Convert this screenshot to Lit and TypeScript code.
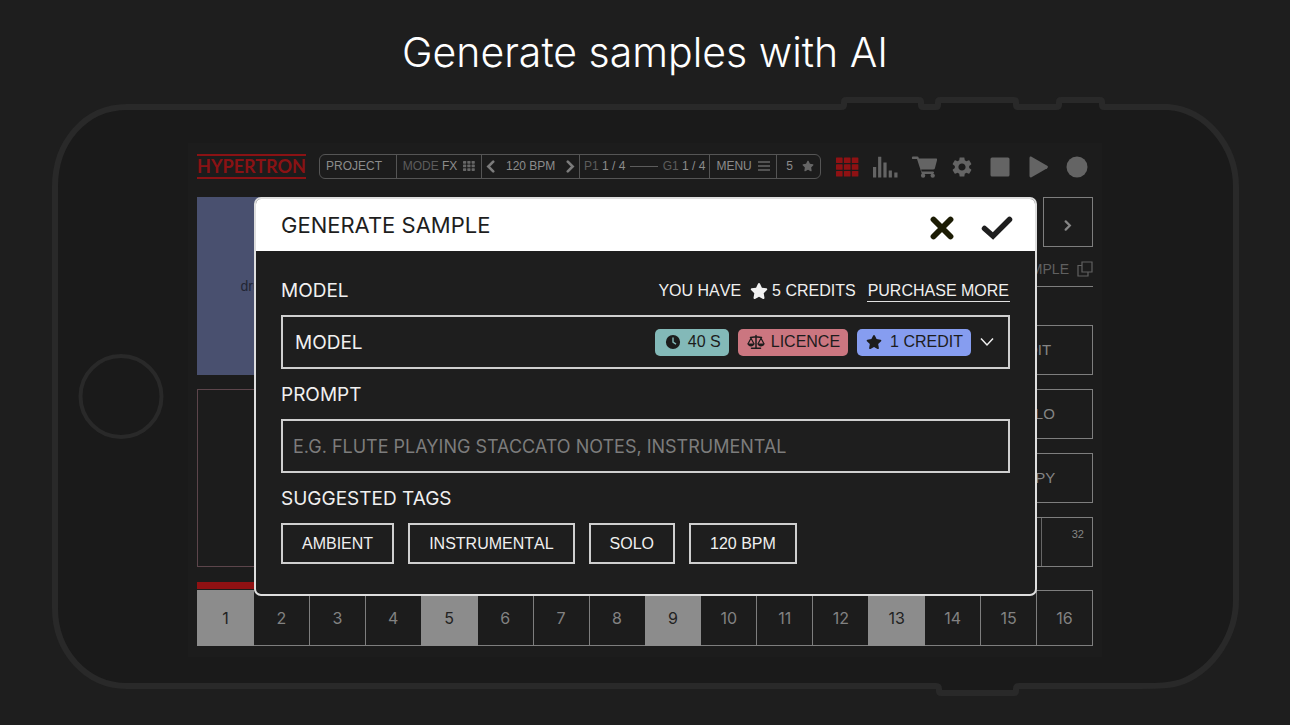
import { LitElement, html, css, svg } from "lit";
import { customElement, property, state } from "lit/decorators.js";

const STAR =
  "M316.9 18C311.6 7 300.4 0 288.1 0s-23.4 7-28.8 18L195 150.3 51.4 171.5c-12 1.8-22 10.2-25.7 21.7s-.7 24.2 7.9 32.7L137.8 329 113.2 474.7c-2 12 3 24.2 12.9 31.3s23 8 33.8 2.3l128.3-68.5 128.3 68.5c10.8 5.7 23.9 4.9 33.8-2.3s14.9-19.3 12.9-31.3L438.5 329 542.7 225.9c8.6-8.5 11.7-21.2 7.9-32.7s-13.7-19.9-25.7-21.7L381.2 150.3 316.9 18z";

const GEAR =
  "M19.14 12.94c.04-.3.06-.61.06-.94 0-.32-.02-.64-.07-.94l2.03-1.58c.18-.14.23-.41.12-.61l-1.92-3.32c-.12-.22-.37-.29-.59-.22l-2.39.96c-.5-.38-1.03-.7-1.62-.94l-.36-2.54c-.04-.24-.24-.41-.48-.41h-3.84c-.24 0-.43.17-.47.41l-.36 2.54c-.59.24-1.13.57-1.62.94l-2.39-.96c-.22-.08-.47 0-.59.22L2.74 8.87c-.12.21-.08.47.12.61l2.03 1.58c-.05.3-.09.63-.09.94s.02.64.07.94l-2.03 1.58c-.18.14-.23.41-.12.61l1.92 3.32c.12.22.37.29.59.22l2.39-.96c.5.38 1.03.7 1.62.94l.36 2.54c.05.24.24.41.48.41h3.84c.24 0 .44-.17.47-.41l.36-2.54c.59-.24 1.13-.56 1.62-.94l2.39.96c.22.08.47 0 .59-.22l1.92-3.32c.12-.22.07-.47-.12-.61l-2.01-1.58zM12 15.6c-1.98 0-3.6-1.62-3.6-3.6s1.62-3.6 3.6-3.6 3.6 1.62 3.6 3.6-1.62 3.6-3.6 3.6z";

const grid9 = (w: number, h: number, sx: number, sy: number) =>
  [0, 1, 2].flatMap((r) =>
    [0, 1, 2].map((c) => svg`<rect x=${c * sx} y=${r * sy} width=${w} height=${h} rx="0.6"/>`)
  );

const ICONS: Record<string, { box: string; body: unknown }> = {
  star: { box: "0 0 576 512", body: svg`<path d=${STAR}/>` },
  pads: { box: "-2 -3.5 26 26", body: grid9(6.6, 5.6, 7.9, 6.7) },
  dots: { box: "0 0 12 10", body: grid9(3.2, 2.7, 4.3, 3.6) },
  bars: {
    box: "0 0 26 26",
    body: svg`<path d="M1 13h3.200v10.500H1zM6.100 2.700h3.200v20.800H6.100zM11.400 8.500h3.200v15h-3.200zM16.700 16.500h3.200v7h-3.200zM22.300 18.500h3.200v5h-3.200z"/>`,
  },
  cart: {
    box: "-1 0 26 26",
    body: svg`<path d="M1 2.600h4.200c.8 0 1.300.4 1.500 1.100l.2.900h17.200c.8 0 1.200.6 1 1.300l-2.200 8.300c-.2.800-.8 1.200-1.500 1.200H9.200l.4 2H20c1.600 0 2 .3 2 1.100s-.5 1-1 1c1.500.500 1.900 1.400 1.900 2.100a2.200 2.200 0 0 1-4.400 0c0-.800.300-1.300.800-1.700h-6.800c.500.400.800.900.800 1.700a2.200 2.200 0 0 1-4.400 0c0-.900.300-1.500.900-1.900L5 5H1C.200 5-.100 4.600-.100 3.900S.300 2.600 1 2.600z"/>`,
  },
  gear: { box: "1 1 22 22", body: svg`<path d=${GEAR}/>` },
  stop: { box: "0 0 26 26", body: svg`<rect x="3.500" y="3.500" width="19" height="19" rx="1.500"/>` },
  play: {
    box: "1 0 26 26",
    body: svg`<path d="M4.500 4v18c0 1.200 1 1.700 2 1.200l15.700-9c1-.6 1-1.800 0-2.400L6.500 2.800c-1-.5-2 0-2 1.200z"/>`,
  },
  record: { box: "0 0 26 26", body: svg`<circle cx="13" cy="13" r="10.500"/>` },
  close: {
    box: "0 0 26 26",
    body: svg`<path d="M4.500 4.500l17 17M21.500 4.500l-17 17" fill="none" stroke="currentColor" stroke-width="5.800" stroke-linecap="round"/>`,
  },
  check: {
    box: "0 0 32 26",
    body: svg`<path d="M3.500 13.500l8.500 7.500L28.500 4.500" fill="none" stroke="currentColor" stroke-width="5.500" stroke-linecap="round" stroke-linejoin="miter"/>`,
  },
  clock: {
    box: "0 0 18 18",
    body: svg`<path fill-rule="evenodd" d="M9 1.900a7.100 7.100 0 1 0 0 14.200 7.100 7.100 0 0 0 0-14.200zM8.300 4.500h1.400v4.200l2.700 1.800-.8 1.200L8.300 9.400z"/>`,
  },
  scales: {
    box: "0 0 18 16",
    body: svg`<g fill="none" stroke="currentColor" stroke-width="1.500" stroke-linecap="round" stroke-linejoin="round"><path d="M9 1.500v12.500M4.500 14.300h9M3.500 3.500L9 2.800l5.500.7"/><path d="M1.200 9.500L4 4.200l2.800 5.300M11.200 9.500L14 4.200l2.800 5.300" stroke-width="1.200"/></g><path d="M.3 9.500h7.400c-.3 1.800-1.800 2.900-3.700 2.900S.6 11.300.3 9.500zM10.300 9.500h7.400c-.3 1.800-1.800 2.900-3.700 2.900s-3.400-1.100-3.700-2.900z"/>`,
  },
  down: {
    box: "0 0 14 10",
    body: svg`<path d="M1 1.500l6 6.500 6-6.500" fill="none" stroke="currentColor" stroke-width="1.500"/>`,
  },
  left: {
    box: "0 0 8 12",
    body: svg`<path d="M6.500 1.500L2 6l4.500 4.500" fill="none" stroke="currentColor" stroke-width="2.400" stroke-linecap="round"/>`,
  },
  right: {
    box: "0 0 8 12",
    body: svg`<path d="M1.500 1.500L6 6l-4.500 4.500" fill="none" stroke="currentColor" stroke-width="2.400" stroke-linecap="round"/>`,
  },
  menu: {
    box: "0 0 12 10",
    body: svg`<path d="M0 1h12M0 5h12M0 9h12" stroke="currentColor" stroke-width="1.400"/>`,
  },
  copy: {
    box: "0 0 16 16",
    body: svg`<path d="M5 1h10v10H5zM5 4.500H1V15h10v-4" fill="none" stroke="currentColor" stroke-width="1.200"/>`,
  },
};

@customElement("app-icon")
class AppIcon extends LitElement {
  @property() name = "star";
  static styles = css`
    :host { display: inline-flex; flex: none; width: 16px; height: 16px; }
    svg { display: block; width: 100%; height: 100%; fill: currentColor; }
  `;
  render() {
    const icon = ICONS[this.name];
    return html`<svg viewBox=${icon.box} aria-hidden="true">${icon.body}</svg>`;
  }
}

@customElement("top-bar")
class TopBar extends LitElement {
  static styles = css`
    :host { display: flex; align-items: center; height: 26px; color: #8c8c8c; font: 12px/14px "Liberation Sans", Arial, sans-serif; }
    .logo {
      box-sizing: border-box; display: flex; justify-content: center; width: 109px; height: 25px; margin-right: 13px;
      border-top: 2px solid #8a1214; border-bottom: 2px solid #8a1214;
      color: #8a1214; font: 700 18px/20px Lato, sans-serif; white-space: nowrap;
    }
    .pill {
      box-sizing: border-box; display: grid; flex: 0 1 502px; height: 25px;
      grid-template-columns: 76fr 86fr 98fr 131fr 67fr 44fr;
      border: 1px solid #555; border-radius: 6px;
    }
    button { font: inherit; color: inherit; background: none; border: 0; margin: 0; padding: 0; }
    .seg { display: flex; align-items: center; justify-content: space-between; padding: 0 6px; white-space: nowrap; }
    .seg + .seg { border-left: 1px solid #555; }
    .seg.spread { padding: 0 4px; }
    .seg.credits { padding: 0 6px 0 9px; }
    .dim { color: #5c5c5c; }
    .dash { flex: 1; height: 1px; margin: 0 5px; background: #5c5c5c; }
    .seg app-icon { width: 12px; height: 12px; color: #666; }
    .step { display: inline-flex; }
    .step app-icon { width: 9px; height: 13px; color: #7c7c7c; }
    nav { display: flex; flex: 1; justify-content: space-between; margin: 0 3px 0 13px; padding-top: 1px; color: #646464; }
    nav button { display: flex; }
    nav app-icon { width: 26px; height: 26px; }
    .gear { box-sizing: border-box; padding: 2px; }
    .on { color: #8f1113; }
  `;
  render() {
    return html`
      <div class="logo">HYPERTRON</div>
      <div class="pill">
        <button class="seg">PROJECT</button>
        <button class="seg"><span><span class="dim">MODE</span> FX</span><app-icon name="dots"></app-icon></button>
        <div class="seg spread">
          <button class="step" aria-label="Slower"><app-icon name="left"></app-icon></button>120 BPM<button
            class="step" aria-label="Faster"><app-icon name="right"></app-icon></button>
        </div>
        <button class="seg spread">
          <span><span class="dim">P1</span> 1 / 4</span><span class="dash"></span><span><span class="dim">G1</span> 1 / 4</span>
        </button>
        <button class="seg">MENU<app-icon name="menu"></app-icon></button>
        <button class="seg credits">5<app-icon name="star"></app-icon></button>
      </div>
      <nav>
        ${["pads", "bars", "cart", "gear", "stop", "play", "record"].map(
          (n) => html`<button class=${n === "pads" ? "on" : ""} aria-label=${n}><app-icon class=${n} name=${n}></app-icon></button>`
        )}
      </nav>
    `;
  }
}

@customElement("step-row")
class StepRow extends LitElement {
  static styles = css`
    :host { display: block; }
    .progress { width: 57px; height: 7px; margin-bottom: 1px; background: #8f1113; }
    .steps { display: grid; grid-template-columns: repeat(16, 1fr); border-right: 1px solid #7e7e7e; }
    button {
      height: 56px; margin: 0; padding: 0; background: none; color: #828282;
      border: 1px solid #7e7e7e; border-right: 0; font: 16px/20px Inter, "Liberation Sans", sans-serif;
    }
    .hit { position: relative; background: #8c8c8c; border-color: #8c8c8c; color: #222; box-shadow: 1px 0 #8c8c8c; }
  `;
  render() {
    return html`
      <div class="progress"></div>
      <div class="steps">
        ${Array.from({ length: 16 }, (_, i) => html`<button class=${i % 4 ? "" : "hit"}>${i + 1}</button>`)}
      </div>
    `;
  }
}

@customElement("generate-dialog")
class GenerateDialog extends LitElement {
  @state() private prompt = "";
  static styles = css`
    :host {
      display: block; box-sizing: border-box; overflow: hidden; border: 2px solid #dedede; border-radius: 7px;
      background: #1e1e1e; color: #f0f0f0; font: 16px/20px "Liberation Sans", Arial, sans-serif; font-kerning: none;
    }
    button, select, input { font: inherit; color: inherit; margin: 0; border-radius: 0; box-sizing: border-box; }
    header { display: flex; align-items: center; height: 52px; padding: 0 20px 0 25px; background: #fff; color: #1e1e1e; }
    h2 { flex: 1; margin: 0; font: 400 22px/26px Inter, sans-serif; }
    header button { display: flex; padding: 0; border: 0; background: none; }
    header .no { width: 26px; margin: 5px 26px 0 0; color: #1c1c04; }
    header .no app-icon { width: 26px; height: 26px; }
    header .yes { margin: 5px 2px 0 0; }
    header .yes app-icon { width: 32px; height: 26px; }
    .body { padding: 14px 25px 30px; }
    .row { box-sizing: border-box; display: flex; align-items: center; height: 50px; padding-top: 2px; }
    .caption { flex: 1; font: 19px/22px Inter, sans-serif; }
    .have { display: flex; align-items: center; }
    .have app-icon { width: 18px; height: 18px; margin: 0 4px 0 9px; }
    a { margin-left: 11px; padding: 0 1px; color: inherit; text-decoration: none; line-height: 20px; border-bottom: 1px solid #e0e0e0; }
    .pick { display: grid; align-items: center; }
    .pick > * { grid-area: 1 / 1; }
    select, input { width: 100%; height: 54px; padding: 0 12px; border: 2px solid #cfcfcf; background: none; outline: 0; }
    select { appearance: none; padding-top: 2px; font: 19px/22px Inter, sans-serif; }
    input { padding: 0 10px; font: 18px/22px Inter, sans-serif; }
    input::placeholder { color: #7c7c7c; opacity: 1; }
    .chips { display: flex; align-items: center; justify-self: end; gap: 9px; padding-right: 16px; pointer-events: none; }
    .chip { display: flex; align-items: center; gap: 6px; height: 27px; padding: 0 8px 0 9px; border-radius: 5px; color: #1c1c1c; }
    .chip app-icon { box-sizing: border-box; width: 18px; height: 18px; }
    .chip.blue app-icon { padding-right: 2px; }
    .teal { background: #83b9b8; }
    .rose { background: #cb7680; }
    .blue { background: #869df0; }
    .down { width: 14px; height: 10px; }
    .tags { display: flex; flex-wrap: wrap; gap: 14px; }
    .tags button { height: 41px; padding: 0 19px; border: 2px solid #cfcfcf; background: none; }
  `;
  render() {
    return html`
      <header>
        <h2>GENERATE SAMPLE</h2>
        <button class="no" aria-label="Cancel"><app-icon name="close"></app-icon></button>
        <button class="yes" aria-label="Confirm"><app-icon name="check"></app-icon></button>
      </header>
      <div class="body">
        <div class="row">
          <label class="caption" for="model">MODEL</label>
          <span class="have">YOU HAVE<app-icon name="star"></app-icon>5 CREDITS</span>
          <a href="#credits">PURCHASE MORE</a>
        </div>
        <div class="pick">
          <select id="model"><option>MODEL</option></select>
          <div class="chips">
            <span class="chip teal"><app-icon name="clock"></app-icon>40 S</span>
            <span class="chip rose"><app-icon name="scales"></app-icon>LICENCE</span>
            <span class="chip blue"><app-icon name="star"></app-icon>1 CREDIT</span>
            <app-icon class="down" name="down"></app-icon>
          </div>
        </div>
        <div class="row"><label class="caption" for="prompt">PROMPT</label></div>
        <input id="prompt" .value=${this.prompt} placeholder="E.G. FLUTE PLAYING STACCATO NOTES, INSTRUMENTAL"
          @input=${(e: Event) => (this.prompt = (e.target as HTMLInputElement).value)} />
        <div class="row"><span class="caption">SUGGESTED TAGS</span></div>
        <div class="tags">
          ${["AMBIENT", "INSTRUMENTAL", "SOLO", "120 BPM"].map(
            (t) => html`<button @click=${() => (this.prompt = this.prompt ? `${this.prompt}, ${t}` : t)}>${t}</button>`
          )}
        </div>
      </div>
    `;
  }
}

@customElement("app-root")
class AppRoot extends LitElement {
  static styles = css`
    :host { display: block; min-height: 100vh; background: #1e1e1e; }
    h1 {
      margin: 0; padding: 24px 0 16px; text-align: center; color: #fff;
      font: 300 41px/56px Inter, "Liberation Sans", sans-serif;
    }
    .device { display: grid; max-width: 1190px; margin: 0 auto; }
    .device > * { grid-area: 1 / 1; }
    .frame { display: block; width: 100%; height: 100%; fill: #1a1a1a; stroke: #292929; stroke-linejoin: round; }
    .screen {
      position: relative; box-sizing: border-box; margin: 47px 138px 39px; padding: 10px 9px;
      background: #1c1c1c; color: #858585; font: 15px/18px "Liberation Sans", Arial, sans-serif;
    }
    .work { display: flex; justify-content: space-between; margin: 18px 0 15px; }
    .pads { display: flex; flex-direction: column; gap: 14px; width: 126px; }
    .pad { box-sizing: border-box; height: 178px; display: flex; align-items: center; justify-content: center; font-size: 14px; }
    .filled { background: #49506f; color: #222634; }
    .empty { border: 1px solid #5c454b; }
    .side { width: 118px; display: flex; flex-direction: column; gap: 14px; }
    .side button { box-sizing: border-box; height: 50px; padding: 0; margin: 0; border: 1px solid #7e7e7e; background: none; color: inherit; font: inherit; }
    .pair { display: flex; justify-content: space-between; }
    .side .pair button { display: flex; justify-content: center; align-items: center; width: 50px; padding-top: 6px; }
    .pair app-icon { width: 8px; height: 11px; }
    .source {
      display: flex; align-items: center; justify-content: flex-end; gap: 8px; height: 34px; margin: -9px 0 24px;
      border-bottom: 1px solid #7e7e7e; color: #606060; font-size: 14px;
    }
    .counts { box-sizing: border-box; display: flex; border: 1px solid #7e7e7e; height: 50px; }
    .counts span { flex: 1; font-size: 11px; line-height: 14px; text-align: right; padding: 9px 8px; }
    .counts span + span { flex: 0 0 34px; border-left: 1px solid #666; }
    generate-dialog { position: absolute; top: 54px; left: 66px; right: 65px; }
  `;
  render() {
    return html`
      <h1>Generate samples with AI</h1>
      <div class="device">
        <svg class="frame" viewBox="50 96 1190 600" preserveAspectRatio="none" aria-hidden="true">
          <path stroke-width="6" d="M127 107H841Q844 107 844 105V102Q844 100 846 100H919Q921 100 921 102V105Q921 107 923 107H936Q938 107 938 105V102Q938 100 940 100H1014Q1016 100 1016 102V105Q1016 107 1018 107H1056Q1059 107 1059 105V102Q1059 100 1061 100H1100Q1102 100 1102 102V105Q1102 107 1104 107H1168C1206 110 1236 146 1236 187V600C1236 635 1214 668 1184 681C1172 686 1156 686 1140 686H1019Q1016 686 1016 689V691Q1016 693 1014 693H941Q939 693 939 691V689Q939 686 936 686H127C85 686 55 650 55 608V187C55 142 85 107 127 107Z"/>
          <circle cx="121" cy="396.500" r="40.500" stroke-width="4"/>
        </svg>
        <main class="screen">
          <top-bar></top-bar>
          <div class="work">
            <div class="pads">
              <div class="pad filled">drums</div>
              <div class="pad empty"></div>
            </div>
            <div class="side">
              <div class="pair">
                <button aria-label="Previous"><app-icon name="left"></app-icon></button>
                <button aria-label="Next"><app-icon name="right"></app-icon></button>
              </div>
              <div class="source">SAMPLE<app-icon name="copy"></app-icon></div>
              <button>EDIT</button>
              <button>SOLO</button>
              <button>COPY</button>
              <div class="counts"><span>16</span><span>32</span></div>
            </div>
          </div>
          <step-row></step-row>
          <generate-dialog role="dialog" aria-label="Generate sample"></generate-dialog>
        </main>
      </div>
    `;
  }
}
